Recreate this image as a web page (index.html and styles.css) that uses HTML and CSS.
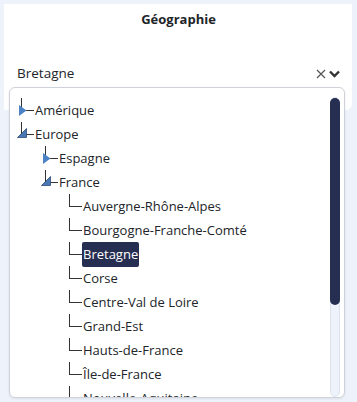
FILE: index.html
```html
<!DOCTYPE html>
<html lang="fr">
<head>
    <meta charset="UTF-8">
    <meta name="viewport" content="width=device-width, initial-scale=1.0">
    <title>Géographie</title>
    <link rel="stylesheet" href="styles.css">
</head>
<body>
    <div class="card">
        <h1 class="card-title">Géographie</h1>
        <div class="select">
            <span class="select-value">Bretagne</span>
            <span class="select-icons">
                <svg class="icon-clear" width="10" height="10" viewBox="0 0 10 10"><path d="M1 1 L9 9 M9 1 L1 9" stroke="#555" stroke-width="1.2" fill="none"/></svg>
                <svg class="icon-chevron" width="11" height="8" viewBox="0 0 11 8"><path d="M1 1.5 L5.5 6 L10 1.5" stroke="#333" stroke-width="2.4" fill="none"/></svg>
            </span>
        </div>
    </div>

    <div class="popup">
        <div class="tree">
            <div class="node level-0">
                <span class="branch"><svg class="toggle collapsed" width="8" height="11" viewBox="0 0 8 11"><path d="M0 0 L7.5 5.5 L0 11 Z"/></svg></span>
                <span class="label">Amérique</span>
            </div>
            <div class="node level-0">
                <span class="branch"><svg class="toggle expanded" width="10" height="10" viewBox="0 0 10 10"><path d="M9.5 0.5 L9.5 9.5 L0.5 9.5 Z"/></svg></span>
                <span class="label">Europe</span>
            </div>
            <div class="node level-1">
                <span class="branch"><svg class="toggle collapsed" width="8" height="11" viewBox="0 0 8 11"><path d="M0 0 L7.5 5.5 L0 11 Z"/></svg></span>
                <span class="label">Espagne</span>
            </div>
            <div class="node level-1">
                <span class="branch"><svg class="toggle expanded" width="10" height="10" viewBox="0 0 10 10"><path d="M9.5 0.5 L9.5 9.5 L0.5 9.5 Z"/></svg></span>
                <span class="label">France</span>
            </div>
            <div class="node level-2"><span class="branch"></span><span class="label">Auvergne-Rhône-Alpes</span></div>
            <div class="node level-2"><span class="branch"></span><span class="label">Bourgogne-Franche-Comté</span></div>
            <div class="node level-2"><span class="branch"></span><span class="label selected">Bretagne</span></div>
            <div class="node level-2"><span class="branch"></span><span class="label">Corse</span></div>
            <div class="node level-2"><span class="branch"></span><span class="label">Centre-Val de Loire</span></div>
            <div class="node level-2"><span class="branch"></span><span class="label">Grand-Est</span></div>
            <div class="node level-2"><span class="branch"></span><span class="label">Hauts-de-France</span></div>
            <div class="node level-2"><span class="branch"></span><span class="label">Île-de-France</span></div>
            <div class="node level-2"><span class="branch"></span><span class="label">Nouvelle-Aquitaine</span></div>
            <div class="node level-2"><span class="branch"></span><span class="label">Normandie</span></div>
            <div class="node level-2"><span class="branch"></span><span class="label">Occitanie</span></div>
            <div class="node level-2"><span class="branch"></span><span class="label">Pays de la Loire</span></div>
            <div class="node level-2"><span class="branch"></span><span class="label">Provence-Alpes-Côte d'Azur</span></div>
        </div>
        <div class="scrollbar">
            <div class="scrollbar-thumb"></div>
        </div>
    </div>
</body>
</html>
```

FILE: styles.css
```css
body {
    margin: 0;
    background-color: #eef3fb;
    font-family: "Open Sans", "Noto Sans", sans-serif;
    color: #212529;
}

.card {
    margin: 4px 5px 0 4px;
    height: 106px;
    box-sizing: border-box;
    padding: 4px 12px 0 13px;
    background-color: #fff;
    border-radius: 0 0 6px 0;
}

.card-title {
    margin: 0;
    font-size: 13px;
    font-weight: 700;
    line-height: 22px;
    text-align: center;
}

.select {
    margin-top: 28px;
    height: 30px;
    display: flex;
    align-items: center;
    justify-content: space-between;
    font-size: 13.5px;
}

.select-icons {
    display: flex;
    align-items: center;
    gap: 3px;
    padding-top: 1px;
}

/* dropdown popup lies over the card */
.popup {
    position: absolute;
    left: 9px;
    top: 87px;
    width: 336px;
    height: 311px;
    box-sizing: border-box;
    background-color: #fff;
    border: 1px solid #cfd3d9;
    border-radius: 6px;
    box-shadow: 0 1px 3px rgba(0, 0, 0, 0.08);
    padding: 10px 4px 0 0;
    display: flex;
    overflow: hidden;
}

.tree {
    flex: 1;
    height: 299px;
    overflow: hidden;
}

.scrollbar {
    flex: none;
    width: 10px;
    height: 300px;
    margin-top: -1px;
    box-sizing: border-box;
    background-color: #eef3fb;
    border: 1px solid #dde3ee;
    border-radius: 5px;
}

.scrollbar-thumb {
    height: 207px;
    margin: 0 -1px;
    background-color: #262e52;
    border-radius: 5px;
}

.node {
    display: flex;
    align-items: flex-start;
    height: 24px;
    font-size: 13px;
    line-height: 24px;
    white-space: nowrap;
}

.level-0 { padding-left: 11px; }
.level-1 { padding-left: 35px; }
.level-2 { padding-left: 59px; }

.branch {
    position: relative;
    flex: none;
    width: 12px;
    height: 12px;
    border-left: 1px solid #333;
    border-bottom: 1px solid #333;
}

.toggle {
    position: absolute;
    fill: #4c82c6;
}

.toggle.collapsed {
    left: -3px;
    top: 7px;
}

.toggle.expanded {
    left: -5px;
    top: 6px;
    fill: #4a78b4;
    stroke: #2d4a73;
    stroke-width: 0.8;
}

.label {
    padding: 0 1px;
    border-radius: 2px;
}

.label.selected {
    background-color: #262e52;
    color: #fff;
    line-height: 25px;
}
```
